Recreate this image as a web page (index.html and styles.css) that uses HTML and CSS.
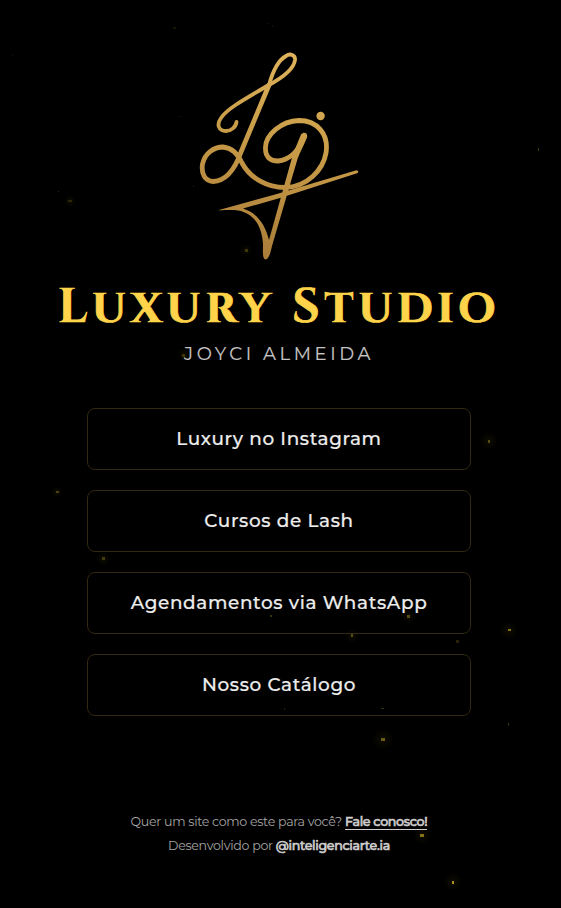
FILE: index.html
```html
<!DOCTYPE html>
<html lang="pt-BR">
<head>
<meta charset="utf-8">
<title>Luxury Studio</title>
<link rel="stylesheet" href="styles.css">
</head>
<body>
<main class="page">
  <svg class="logo" viewBox="190 40 180 230" aria-hidden="true">
    <defs>
      <linearGradient id="gold" gradientUnits="userSpaceOnUse" x1="300" y1="52" x2="245" y2="258">
        <stop offset="0" stop-color="#e0b45c"/>
        <stop offset=".4" stop-color="#cb9e4a"/>
        <stop offset="1" stop-color="#a87b38"/>
      </linearGradient>
    </defs>
    <g fill="none" stroke="url(#gold)" stroke-linecap="round" stroke-linejoin="round">
      <path stroke-width="3.8" d="M236.500 122C236 127 231 131 226 131C219 131 216 125 221 118C227 109 243 100 268 85.500C284 77 294 68 295 60C295.500 55 290 53 286 56C277 61 272 74 269 85"/>
      <path stroke-width="4.800" d="M269 85L241 152C234 172 225 181 213 181.500C205 181 201 174 202.500 164C205 153 214 147 223 147C232 148 237 153 242 163C250 178 267 187.500 285 187.500C307 187 323 170 326 153C329 134 317 120.500 299 120.500C281 121 266 135 265.500 147C265 157 270 161 278 161C288 160 297 153 302 141"/>
    </g>
    <g fill="url(#gold)">
      <path d="M301 134.500C304 131 308.500 133 306.800 138C304 145 300 152 297.500 159L272 246C270.500 253 269 259 265.500 259.500C262 259 263 250 263 244C262 225 253 213 238 210.500C231 209.500 222 210.500 218 210.200L276 194.300L356.500 170.300Q360 171.500 357 173.200L280 198L243 208.500C257 213 265 224 269 240L293 154Z"/>
      <circle cx="320.600" cy="116" r="4.200"/>
    </g>
  </svg>
  <h1 class="title">Luxury Studio</h1>
  <p class="subtitle">JOYCI ALMEIDA</p>
  <nav class="links">
    <a class="link">Luxury no Instagram</a>
    <a class="link">Cursos de Lash</a>
    <a class="link">Agendamentos via WhatsApp</a>
    <a class="link">Nosso Catálogo</a>
  </nav>
  <footer class="footer">
    <p>Quer um site como este para você? <a class="strong contact">Fale conosco!</a></p>
    <p>Desenvolvido por <span class="strong">@inteligenciarte.ia</span></p>
  </footer>
</main>
<svg class="sparks" viewBox="0 0 561 908" aria-hidden="true">
  <defs><radialGradient id="glow"><stop offset="0" stop-color="#ffd700" stop-opacity=".06"/><stop offset="1" stop-color="#ffd700" stop-opacity="0"/></radialGradient></defs>
  <g fill="url(#glow)">
    <circle cx="489" cy="441" r="9"/><circle cx="509" cy="630" r="9"/><circle cx="383" cy="739.500" r="11"/><circle cx="422" cy="835" r="9"/><circle cx="453" cy="882" r="9"/><circle cx="408.500" cy="616" r="8"/><circle cx="352" cy="636" r="7"/><circle cx="103" cy="559" r="7"/><circle cx="57" cy="492" r="6"/><circle cx="184" cy="355" r="7"/><circle cx="246" cy="250" r="6"/><circle cx="70" cy="201" r="6"/>
  </g>
  <g fill="#c4a928">
    <rect x="173" y="27" width="3" height="2" opacity=".12"/><rect x="268" y="23" width="1" height="1" opacity=".15"/><rect x="272" y="25" width="1" height="2" opacity=".1"/><rect x="12" y="54" width="1" height="2" opacity=".1"/><rect x="178" y="116" width="3" height="1" opacity=".08"/><rect x="58" y="191" width="1" height="1" opacity=".2"/><rect x="68" y="200" width="4" height="2" opacity=".18"/><rect x="193" y="185" width="1" height="2" opacity=".12"/><rect x="245" y="249" width="3" height="3" opacity=".28"/><rect x="538" y="148" width="1" height="3" opacity=".35"/><rect x="182" y="354" width="3" height="3" opacity=".28"/>
    <rect x="488" y="440" width="2" height="3" opacity=".4"/><rect x="56" y="491" width="3" height="2" opacity=".35"/><rect x="102" y="557" width="3" height="3" opacity=".3"/><rect x="270" y="615" width="2" height="2" opacity=".3"/><rect x="407" y="615" width="3" height="3" opacity=".4"/><rect x="508" y="629" width="3" height="2" opacity=".65"/><rect x="351" y="634" width="2" height="3" opacity=".4"/><rect x="456" y="640" width="3" height="3" opacity=".2"/><rect x="284" y="708" width="1" height="2" opacity=".2"/><rect x="381" y="708" width="3" height="1" opacity=".3"/><rect x="508" y="723" width="1" height="3" opacity=".3"/><rect x="381" y="738" width="4" height="3" opacity=".5"/><rect x="420" y="834" width="4" height="3" opacity=".65"/><rect x="452" y="881" width="2" height="3" opacity=".85"/>
  </g>
</svg>
</body>
</html>
```
FILE: styles.css
```css
* { box-sizing: border-box; }
body {
  margin: 0;
  background: #000;
  color: #ececec;
  font-family: Montserrat, Inter, "Liberation Sans", sans-serif;
}
.page {
  display: flex;
  flex-direction: column;
  align-items: center;
  width: 558px;
  height: 908px;
  padding-top: 40px;
}
.logo { display: block; width: 180px; height: 230px; margin-left: 2px; flex: none; }
.title {
  margin: 9px 0 0;
  height: 58px;
  line-height: 58px;
  color: #ffd44a;
  font-family: Cinzel, "Liberation Serif", serif;
  font-size: 48px;
  font-weight: 700;
  letter-spacing: 4.75px;
  white-space: nowrap;
  -webkit-text-stroke: .7px #ffd44a;
}
.subtitle {
  margin: 4px 0 0;
  height: 26px;
  line-height: 26px;
  color: #c6c4c4;
  font-size: 18px;
  letter-spacing: 3.6px;
  -webkit-text-stroke: .15px #c6c4c4;
}
.links {
  display: flex;
  flex-direction: column;
  gap: 20px;
  width: 384px;
  margin: 41px 0 0;
}
.link {
  display: flex;
  align-items: center;
  justify-content: center;
  height: 62px;
  border: 1px solid #332810;
  border-radius: 8px;
  font-size: 18.4px;
  font-weight: 500;
  letter-spacing: .65px;
  line-height: 22px;
  padding-bottom: 1px;
  -webkit-text-stroke: .2px #ececec;
}
.footer {
  margin-top: 94px;
  color: #a6a4a4;
  font-size: 12.6px;
  letter-spacing: -.3px;
  line-height: 24px;
  text-align: center;
}
.footer p { margin: 0; white-space: nowrap; }
.strong { color: #cfcdcd; font-weight: 500; -webkit-text-stroke: .6px #cfcdcd; }
.contact { border-bottom: 1px solid #cfcdcd; }
.sparks { position: absolute; top: 0; left: 0; width: 561px; height: 908px; pointer-events: none; }
```
